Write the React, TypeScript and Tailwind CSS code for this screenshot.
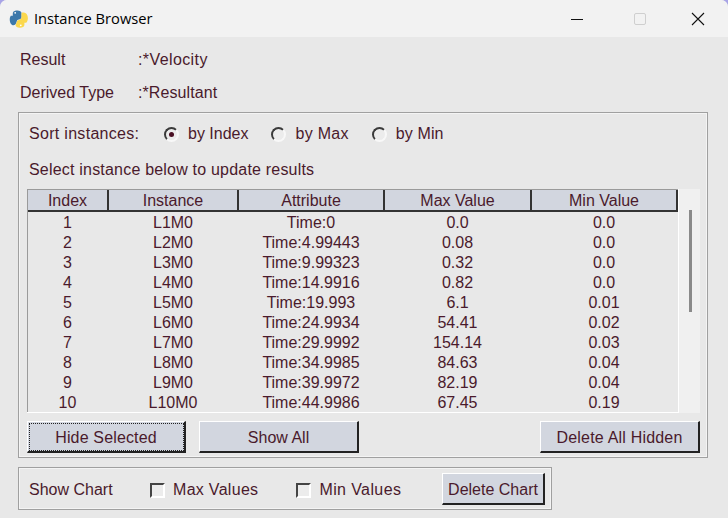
const rows = [
  ['1', 'L1M0', 'Time:0', '0.0', '0.0'],
  ['2', 'L2M0', 'Time:4.99443', '0.08', '0.0'],
  ['3', 'L3M0', 'Time:9.99323', '0.32', '0.0'],
  ['4', 'L4M0', 'Time:14.9916', '0.82', '0.0'],
  ['5', 'L5M0', 'Time:19.993', '6.1', '0.01'],
  ['6', 'L6M0', 'Time:24.9934', '54.41', '0.02'],
  ['7', 'L7M0', 'Time:29.9992', '154.14', '0.03'],
  ['8', 'L8M0', 'Time:34.9985', '84.63', '0.04'],
  ['9', 'L9M0', 'Time:39.9972', '82.19', '0.04'],
  ['10', 'L10M0', 'Time:44.9986', '67.45', '0.19'],
]

const columns = [
  { label: 'Index', width: 'w-[81px]' },
  { label: 'Instance', width: 'w-[130px]' },
  { label: 'Attribute', width: 'w-[146px]' },
  { label: 'Max Value', width: 'w-[147px]' },
  { label: 'Min Value', width: 'w-[146px]' },
]

function PythonIcon() {
  return (
    <svg width="20" height="20" viewBox="0 0 20 20" aria-hidden="true">
      <path d="M7 1.500C4.800 1.800 3.800 3 3.800 4.600V6.800H1.800C1 8 .6 9.500.8 11.500c.2 2.200 1 3.700 2.400 4.600 1.200.6 2.500 0 3.300-.8.800-1 1-2 1.300-3.100.3-1 1-1.500 2-1.700l1.200-.3c1-.4 1.500-1.100 1.500-2.200V4C12.500 2.200 10 1 7 1.500Z" fill="#3c78aa" />
      <path d="M13.500 3.500c-.8 0-1 .7-1 1.500v2.800c0 1.400-.8 2.600-2.200 3.100l-1.100.3c-.8.300-1.200.8-1.400 1.600-.3 1.100-.5 2-1.200 3V16c0 1.500 1.700 2.800 4.300 2.800 2.600 0 4.300-1 4.500-2.800v-2.300h1.800c1-1 1.700-2.700 1.700-4.500 0-2.300-1-4.400-2.600-5.200-1-.5-1.900-.5-2.800-.5Z" fill="#fbd84d" />
      <circle cx="6.200" cy="3.800" r="0.900" fill="#fff" />
      <circle cx="11.800" cy="16.300" r="0.900" fill="#fff" />
    </svg>
  )
}

function Radio({ label, checked, tracking }: { label: string; checked?: boolean; tracking?: string }) {
  return (
    <label className="flex items-center gap-[9px]">
      <span className="flex h-[15px] w-[15px] items-center justify-center rounded-full border-2 border-t-[#3a3a3a] border-l-[#3a3a3a] border-r-[#f8f8f8] border-b-[#f8f8f8] bg-[#ececec]">
        {checked && <span className="h-[5px] w-[5px] rounded-full bg-[#4a1024]" />}
      </span>
      <span className={tracking}>{label}</span>
    </label>
  )
}

function Check({ label, tracking }: { label: string; tracking?: string }) {
  return (
    <label className="flex items-center gap-[8px]">
      <span className="h-[15px] w-[15px] border-2 border-t-[#444] border-l-[#444] border-r-white border-b-white bg-[#ececec]" />
      <span className={tracking}>{label}</span>
    </label>
  )
}

function Button({
  label,
  width,
  focused,
  tracking,
}: {
  label: string
  width: string
  focused?: boolean
  tracking?: string
}) {
  return (
    <button
      type="button"
      className={`${width} flex h-[32px] items-center justify-center border border-t-white border-l-white border-r-2 border-b-2 border-r-[#222] border-b-[#222] bg-[#d2d6df] pt-[2px] ${focused ? 'outline-1 outline-dotted -outline-offset-3 outline-[#222]' : ''}`}
    >
      <span className={tracking}>{label}</span>
    </button>
  )
}

export default function App() {
  return (
    <div className="h-[518px] w-[728px] overflow-hidden bg-[#a8a4e6]">
      <div className="flex h-full flex-col overflow-hidden rounded-t-[7px] bg-[#e8e8e8] font-['Liberation_Sans',Arial,sans-serif] text-[16px] text-[#4a1a2c]">
        <header className="flex h-[37px] shrink-0 items-center bg-[#f2f2f2] pl-[9px] text-black">
          <PythonIcon />
          <span className="ml-[5px] font-['Open_Sans',sans-serif] text-[14.7px]">Instance Browser</span>
          <div className="ml-auto flex items-center">
            <svg width="14" height="14" viewBox="0 0 14 14" className="mr-[50px]" aria-hidden="true">
              <path d="M1 7.500H13" stroke="#111" strokeWidth="1" />
            </svg>
            <span className="mr-[45px] h-[12px] w-[12px] rounded-[2px] border border-[#cfcfcf]" />
            <svg width="14" height="14" viewBox="0 0 14 14" className="mr-[23px]" aria-hidden="true">
              <path d="M1 1L13 13M13 1L1 13" stroke="#111" strokeWidth="1.100" />
            </svg>
          </div>
        </header>

        <main className="flex flex-1 flex-col pl-[18px] pt-[7px]">
          <div className="flex h-[32px] items-center pl-[2px]">
            <span className="w-[118px]">Result</span>
            <span className="tracking-[0.4px]">:*Velocity</span>
          </div>
          <div className="flex h-[32px] items-center pl-[2px] pt-[2px]">
            <span className="w-[118px]">Derived Type</span>
            <span className="tracking-[0.1px]">:*Resultant</span>
          </div>

          <section className="mt-[4px] h-[346px] w-[690px] border border-[#a0a0a0] pl-[8px] pt-[6px] shadow-[inset_0_0_0_1px_#f4f4f4]">
            <div className="ml-[2px] flex h-[30px] items-center">
              <span className="w-[135px] tracking-[0.3px]">Sort instances:</span>
              <Radio label="by Index" checked />
              <div className="ml-[23px]">
                <Radio label="by Max" tracking="tracking-[0.3px]" />
              </div>
              <div className="ml-[23px]">
                <Radio label="by Min" tracking="tracking-[0.1px]" />
              </div>
            </div>
            <div className="ml-[2px] mt-[9px] flex h-[24px] items-center tracking-[0.2px]">
              Select instance below to update results
            </div>

            <div className="mt-[7px] flex h-[224px] w-[673px] bg-[#f0f0f0]">
              <div className="w-[652px] border-r border-b-2 border-white">
                <div className="flex h-[23px] border-t border-l border-t-[#9a9a9a] border-l-[#9a9a9a]">
                  {columns.map((col) => (
                    <div
                      key={col.label}
                      className={`${col.width} flex items-center justify-center border-r-2 border-b-2 border-[#333] bg-[#d2d6df] pt-[1px]`}
                    >
                      {col.label}
                    </div>
                  ))}
                </div>
                <div className="bg-[#e8e8e8] shadow-[inset_1px_0_0_#9a9a9a]">
                  {rows.map((row) => (
                    <div key={row[0]} className="flex h-[20px] items-center pt-[1px]">
                      {row.map((cell, i) => (
                        <div key={i} className={`${columns[i].width} text-center`}>
                          {cell}
                        </div>
                      ))}
                    </div>
                  ))}
                </div>
              </div>
              <div className="ml-[10px] mt-[21px] h-[102px] w-[3px] bg-[#8a8a8a]" />
            </div>

            <div className="mt-[8px] flex w-[673px]">
              <Button label="Hide Selected" width="w-[159px]" focused tracking="tracking-[0.15px]" />
              <Button label="Show All" width="w-[160px] ml-[13px]" />
              <Button label="Delete All Hidden" width="w-[160px] ml-auto" tracking="tracking-[0.2px]" />
            </div>
          </section>

          <section className="mt-[9px] flex h-[43px] w-[534px] items-center border border-[#a0a0a0] pl-[10px] pt-[3px] shadow-[inset_0_0_0_1px_#f4f4f4]">
            <span className="w-[121px]">Show Chart</span>
            <Check label="Max Values" tracking="tracking-[0.3px]" />
            <div className="ml-[38px]">
              <Check label="Min Values" tracking="tracking-[0.4px]" />
            </div>
            <Button label="Delete Chart" width="w-[103px] ml-auto mr-[6px] -mt-[2px]" />
          </section>
        </main>
      </div>
    </div>
  )
}
